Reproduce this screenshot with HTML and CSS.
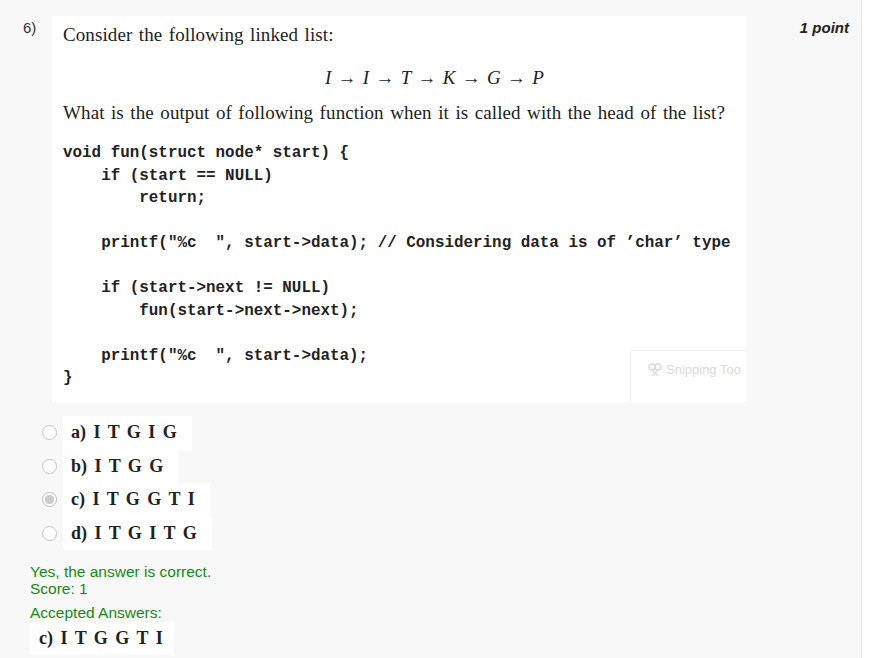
FILE: index.html
```html
<!DOCTYPE html>
<html>
<head>
<meta charset="utf-8">
<link rel="stylesheet" href="styles.css">
</head>
<body>
<div class="page">
  <div class="question">
    <div class="qnum">6)</div>
    <div class="qimage">
      <p class="tex intro">Consider the following linked list:</p>
      <p class="formula"><i>I</i> → <i>I</i> → <i>T</i> → <i>K</i> → <i>G</i> → <i>P</i></p>
      <p class="tex ask">What is the output of following function when it is called with the head of the list?</p>
      <div class="code">
        <div class="ln">void fun(struct node* start) {</div>
        <div class="ln">    if (start == NULL)</div>
        <div class="ln">        return;</div>
        <div class="ln blank"> </div>
        <div class="ln">    printf("%c  ", start-&gt;data); // Considering data is of ’char’ type</div>
        <div class="ln blank"> </div>
        <div class="ln">    if (start-&gt;next != NULL)</div>
        <div class="ln">        fun(start-&gt;next-&gt;next);</div>
        <div class="ln blank"> </div>
        <div class="ln">    printf("%c  ", start-&gt;data);</div>
        <div class="ln">}</div>
      </div>
      <div class="snip">
        <svg class="snip-icon" width="16" height="16" viewBox="0 0 16 16"><circle cx="5" cy="5" r="3" fill="none" stroke="#f2d0d0" stroke-width="1.5"/><circle cx="11" cy="5" r="3" fill="none" stroke="#f2d0d0" stroke-width="1.5"/><path d="M5 8 L11 14 M11 8 L5 14" stroke="#cfe0ea" stroke-width="1.5"/></svg>
        <span class="snip-text">Snipping Too</span>
      </div>
    </div>
    <div class="points">1 point</div>
  </div>

  <ul class="options">
    <li class="option"><span class="radio"></span><span class="opt-box">a) I T G I G</span></li>
    <li class="option"><span class="radio"></span><span class="opt-box">b) I T G G</span></li>
    <li class="option"><span class="radio checked"></span><span class="opt-box">c) I T G G T I</span></li>
    <li class="option"><span class="radio"></span><span class="opt-box">d) I T G I T G</span></li>
  </ul>

  <div class="feedback">
    <div class="correct">Yes, the answer is correct.<br>Score: 1</div>
    <div class="accepted-label">Accepted Answers:</div>
    <div class="accepted-box">c) I T G G T I</div>
  </div>
</div>
</body>
</html>
```

FILE: styles.css
```css
html, body {
  margin: 0;
  padding: 0;
  background: #ffffff;
}

.page {
  width: 862px;
  height: 658px;
  box-sizing: border-box;
  background: #f8f8f8;
  border-right: 1px solid #e6e6e6;
  padding-top: 16px;
  font-family: "Liberation Sans", Arial, sans-serif;
}

.question {
  display: flex;
  align-items: flex-start;
}

.qnum {
  width: 52px;
  box-sizing: border-box;
  padding-left: 23px;
  padding-top: 3px;
  font-size: 15px;
  color: #333;
}

.qimage {
  position: relative;
  width: 694px;
  height: 386px;
  box-sizing: border-box;
  background: #ffffff;
  padding: 8px 0 0 11px;
  color: #222;
}

.tex {
  margin: 0;
  font-family: "Liberation Serif", "Times New Roman", serif;
  font-size: 19px;
  line-height: 22px;
  letter-spacing: 0.1px;
  word-spacing: 1.6px;
}

.formula {
  margin: 21px 0 0 0;
  padding-left: 262px;
  font-family: "Liberation Serif", "Times New Roman", serif;
  font-size: 19px;
  line-height: 22px;
  word-spacing: 1.5px;
}

.ask {
  margin-top: 13px;
}

.code {
  margin: 18px 0 0 0;
  font-family: "Liberation Mono", "Courier New", monospace;
  font-weight: bold;
  font-size: 15.9px;
  line-height: 22.5px;
  color: #222;
}

.ln {
  white-space: pre;
  width: max-content;
  height: 22.5px;
}

.snip {
  position: absolute;
  left: 578px;
  top: 334px;
  width: 116px;
  height: 52px;
  box-sizing: border-box;
  border: 1px solid #f0f0f0;
  border-right: none;
  border-bottom: none;
  padding: 11px 0 0 16px;
  display: flex;
  align-items: flex-start;
  gap: 3px;
  font-size: 13px;
  color: #dadada;
  white-space: nowrap;
  overflow: hidden;
}

.snip-text {
  line-height: 16px;
}

.points {
  margin-left: auto;
  padding-right: 12px;
  padding-top: 3px;
  font-size: 15px;
  font-style: italic;
  font-weight: bold;
  color: #222;
}

.options {
  list-style: none;
  margin: 14px 0 0 0;
  padding: 0 0 0 42px;
}

.option {
  display: flex;
  align-items: center;
  height: 33.5px;
}

.radio {
  width: 15px;
  height: 15px;
  border: 1px solid #c4c4c4;
  border-radius: 50%;
  background: #fff;
  box-sizing: border-box;
  margin-right: 6px;
}

.radio.checked {
  border-color: #bcbcbc;
  background: radial-gradient(circle, #cdcdcd 0 4.5px, #fff 5px);
}

.opt-box {
  display: flex;
  align-items: center;
  height: 100%;
  background: #ffffff;
  padding: 0 15px 0 8px;
  font-family: "Liberation Serif", "Times New Roman", serif;
  font-weight: bold;
  font-size: 18px;
  color: #222;
  word-spacing: 3px;
}

.feedback {
  margin-top: 13px;
  padding-left: 30px;
  font-size: 15.5px;
  color: #148a14;
}

.correct {
  line-height: 17px;
}

.accepted-label {
  margin-top: 7px;
  line-height: 17px;
}

.accepted-box {
  display: inline-flex;
  align-items: center;
  height: 33px;
  margin-top: 1px;
  background: #ffffff;
  padding: 0 11px 0 9px;
  font-family: "Liberation Serif", "Times New Roman", serif;
  font-weight: bold;
  font-size: 18px;
  color: #222;
  word-spacing: 3px;
}
```
